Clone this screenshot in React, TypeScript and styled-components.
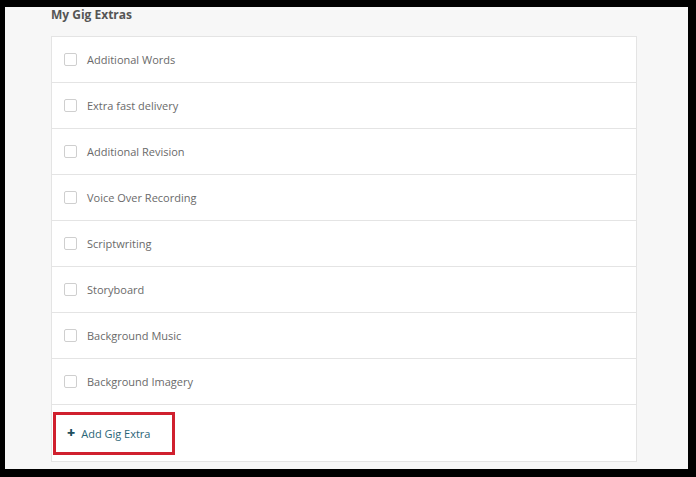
import React from "react";
import styled, { createGlobalStyle } from "styled-components";

const Global = createGlobalStyle`
  html, body { margin: 0; padding: 0; background: #000; }
  body { font-family: "Open Sans", "Liberation Sans", sans-serif; }
`;

const Frame = styled.div`
  width: 696px; height: 477px; box-sizing: border-box;
  background: #000; padding: 7px 8px 8px 5px;
`;
const Screen = styled.div`
  height: 100%; background: #f7f7f7; box-sizing: border-box;
  padding: 0 0 0 46px; display: flex; flex-direction: column;
`;
const Title = styled.h3`
  margin: 0; height: 29px; line-height: 16px; padding-top: 0;
  font-size: 12px; font-weight: 700; color: #555;
`;
const Card = styled.div`
  width: 586px; background: #fff; border: 1px solid #e4e4e4; box-sizing: border-box;
`;
const Row = styled.div`
  height: 46px; display: flex; align-items: center; gap: 10px;
  padding-left: 12px; border-bottom: 1px solid #e4e4e4; box-sizing: border-box;
  font-size: 11px; color: #6a6a6a;
`;
const Box = styled.span`
  width: 11px; height: 11px; border: 1px solid #cfcfcf; border-radius: 2px; background: #fff;
`;
const Footer = styled.div`
  height: 56px; display: flex; align-items: center; padding-left: 1px; box-sizing: border-box;
`;
const AddBtn = styled.div`
  width: 122px; height: 43px; box-sizing: border-box; border: 3px solid #d0202e;
  display: flex; align-items: center; gap: 6px; padding-left: 11px;
  font-size: 11px; color: #2a6577;
`;
const Plus = styled.span`
  font-weight: 800; font-size: 14px; color: #1e4f5e; line-height: 1;
`;

const items = ["Additional Words","Extra fast delivery","Additional Revision","Voice Over Recording","Scriptwriting","Storyboard","Background Music","Background Imagery"];

export default function App() {
  return (
    <Frame>
      <Global />
      <Screen>
        <Title>My Gig Extras</Title>
        <Card>
          {items.map(t => (<Row key={t}><Box />{t}</Row>))}
          <Footer><AddBtn><Plus>+</Plus>Add Gig Extra</AddBtn></Footer>
        </Card>
      </Screen>
    </Frame>
  );
}
